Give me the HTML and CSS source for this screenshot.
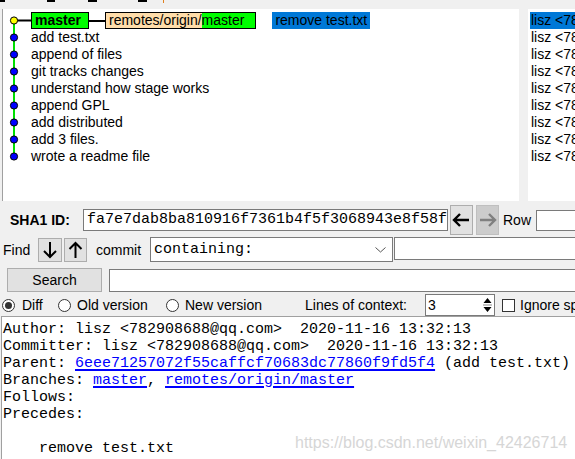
FILE: index.html
```html
<!DOCTYPE html>
<html>
<head>
<meta charset="utf-8">
<link rel="stylesheet" href="styles.css">
</head>
<body>
<div class="app">
  <div class="topstrip">
    <span class="dash d1"></span><span class="dash d2"></span><span class="dash d3"></span><span class="dash d4"></span><span class="tick"></span>
  </div>

  <div class="panes">
    <div class="commits">
      <svg class="graph" width="28" height="160" viewBox="0 0 28 160">
        <line x1="11" y1="8.5" x2="11" y2="144.5" stroke="#00e000" stroke-width="2"/>
        <line x1="11" y1="8.5" x2="28" y2="8.5" stroke="#000" stroke-width="2"/>
        <circle cx="11" cy="8.5" r="3.6" fill="#ffff00" stroke="#000" stroke-width="1"/>
        <circle cx="11" cy="25.5" r="3.6" fill="#0000ff" stroke="#000" stroke-width="1"/>
        <circle cx="11" cy="42.5" r="3.6" fill="#0000ff" stroke="#000" stroke-width="1"/>
        <circle cx="11" cy="59.5" r="3.6" fill="#0000ff" stroke="#000" stroke-width="1"/>
        <circle cx="11" cy="76.5" r="3.6" fill="#0000ff" stroke="#000" stroke-width="1"/>
        <circle cx="11" cy="93.5" r="3.6" fill="#0000ff" stroke="#000" stroke-width="1"/>
        <circle cx="11" cy="110.5" r="3.6" fill="#0000ff" stroke="#000" stroke-width="1"/>
        <circle cx="11" cy="127.5" r="3.6" fill="#0000ff" stroke="#000" stroke-width="1"/>
        <circle cx="11" cy="144.5" r="3.6" fill="#0000ff" stroke="#000" stroke-width="1"/>
      </svg>
      <div class="rows">
        <div class="row">
          <span class="ref head">master</span><span class="connector"></span><span class="ref remote"><span class="rp">remotes/origin/</span><span class="rg">master</span></span><span class="msg sel">remove test.txt</span>
        </div>
        <div class="row">add test.txt</div>
        <div class="row">append of files</div>
        <div class="row">git tracks changes</div>
        <div class="row">understand how stage works</div>
        <div class="row">append GPL</div>
        <div class="row">add distributed</div>
        <div class="row">add 3 files.</div>
        <div class="row">wrote a readme file</div>
      </div>
    </div>
    <div class="authors">
      <div class="arow"><span class="asel">lisz &lt;782908688@qq.com&gt;</span></div>
      <div class="arow"><span class="aname">lisz &lt;782908688@qq.com&gt;</span></div>
      <div class="arow"><span class="aname">lisz &lt;782908688@qq.com&gt;</span></div>
      <div class="arow"><span class="aname">lisz &lt;782908688@qq.com&gt;</span></div>
      <div class="arow"><span class="aname">lisz &lt;782908688@qq.com&gt;</span></div>
      <div class="arow"><span class="aname">lisz &lt;782908688@qq.com&gt;</span></div>
      <div class="arow"><span class="aname">lisz &lt;782908688@qq.com&gt;</span></div>
      <div class="arow"><span class="aname">lisz &lt;782908688@qq.com&gt;</span></div>
      <div class="arow"><span class="aname">lisz &lt;782908688@qq.com&gt;</span></div>
    </div>
  </div>

  <div class="sha-row">
    <span class="sha-lbl">SHA1 ID:</span>
    <div class="entry sha-entry">fa7e7dab8ba810916f7361b4f5f3068943e8f58f</div>
    <div class="navbtn back">
      <svg width="21" height="28" viewBox="0 0 21 28"><path d="M3 14 H18 M9 8 L3 14 L9 20" fill="none" stroke="#000" stroke-width="2.4"/></svg>
    </div>
    <div class="navbtn fwd">
      <svg width="21" height="28" viewBox="0 0 21 28"><path d="M3 14 H18 M12 8 L18 14 L12 20" fill="none" stroke="#808080" stroke-width="2.4"/></svg>
    </div>
    <span class="row-lbl">Row</span>
    <div class="entry row-entry"></div>
  </div>

  <div class="find-row">
    <span class="find-lbl">Find</span>
    <div class="arrbtn down">
      <svg width="22" height="22" viewBox="0 0 22 22"><path d="M11 3 V18 M5 12 L11 18 L17 12" fill="none" stroke="#000" stroke-width="2"/></svg>
    </div>
    <div class="arrbtn up">
      <svg width="21" height="22" viewBox="0 0 21 22"><path d="M10.5 19 V4 M4.5 10 L10.5 4 L16.5 10" fill="none" stroke="#000" stroke-width="2"/></svg>
    </div>
    <span class="commit-lbl">commit</span>
    <div class="combo">
      <span class="combo-text">containing:</span>
      <svg class="chev" width="11" height="6" viewBox="0 0 11 6"><path d="M0.5 0.5 L5.5 5 L10.5 0.5" fill="none" stroke="#555" stroke-width="1"/></svg>
    </div>
    <div class="entry find-entry"></div>
  </div>

  <div class="search-row">
    <div class="btn search-btn">Search</div>
    <div class="entry search-entry"></div>
  </div>

  <div class="diff-row">
    <span class="radio checked"></span><span class="dlbl lbl-diff">Diff</span>
    <span class="radio"></span><span class="dlbl lbl-old">Old version</span>
    <span class="radio"></span><span class="dlbl lbl-new">New version</span>
    <span class="ctx-lbl">Lines of context:</span>
    <div class="spin">
      <span class="spin-val">3</span>
      <svg class="spin-arrows" width="11" height="18" viewBox="0 0 11 18"><path d="M5.5 2 L9.5 7 H1.5 Z M1.5 11 H9.5 L5.5 16 Z" fill="#000"/><path d="M1 9 H10" stroke="#888" stroke-width="1"/></svg>
    </div>
    <span class="checkbox"></span><span class="ign-lbl">Ignore space change</span>
  </div>

  <div class="details"><div class="dline">Author: lisz &lt;782908688@qq.com&gt;  2020-11-16 13:32:13</div><div class="dline">Committer: lisz &lt;782908688@qq.com&gt;  2020-11-16 13:32:13</div><div class="dline">Parent: <span class="lnk">6eee71257072f55caffcf70683dc77860f9fd5f4</span> (add test.txt)</div><div class="dline">Branches: <span class="lnk">master</span>, <span class="lnk">remotes/origin/master</span></div><div class="dline">Follows:</div><div class="dline">Precedes:</div><div class="dline"> </div><div class="dline">    remove test.txt</div></div>

  <div class="watermark">https://blog.csdn.net/weixin_42426714</div>
</div>
</body>
</html>
```

FILE: styles.css
```css
html, body {
  margin: 0;
  padding: 0;
  background: #f0f0f0;
}

.app {
  position: relative;
  width: 575px;
  height: 459px;
  overflow: hidden;
  background: #f0f0f0;
  font-family: "Liberation Sans", Arial, sans-serif;
  font-size: 14px;
  color: #000;
  display: flex;
  flex-direction: column;
}

/* top remnant strip */
.topstrip {
  height: 9px;
  flex: none;
  display: flex;
  align-items: flex-start;
}
.dash { height: 2px; background: #000; flex: none; }
.d1 { width: 5px; }
.d2 { width: 8px; margin-left: 42px; }
.d3 { width: 9px; margin-left: 33px; }
.d4 { width: 9px; margin-left: 41px; }
.tick { width: 1px; height: 3px; margin-left: 16px; background: #e0801e; flex: none; }

/* panes */
.panes {
  height: 192px;
  flex: none;
  display: flex;
}
.commits {
  flex: none;
  margin-left: 2px;
  border-left: 1px solid #a0a0a0;
  width: 516px;
  background: #fff;
  display: flex;
  align-items: flex-start;
  padding-top: 3px;
  overflow: hidden;
}
.graph { flex: none; display: block; }
.rows { flex: 1; }
.row {
  height: 17px;
  line-height: 17px;
  white-space: nowrap;
  display: flex;
  align-items: center;
}
.row > * { flex: none; }
.ref {
  box-sizing: border-box;
  height: 17px;
  line-height: 15px;
  border: 1px solid #000;
  display: flex;
}
.head {
  width: 58px;
  padding-left: 3px;
  background: #00ff00;
  font-weight: bold;
}
.connector {
  width: 16px;
  height: 2px;
  background: #000;
}
.rp { background: #ffddaa; padding-left: 3px; }
.rg { background: #00ff00; padding-right: 11px; }
.sel { background: #0078d7; }
.msg {
  margin-left: 16px;
  padding: 0 3px;
  height: 17px;
  line-height: 17px;
}

.authors {
  margin-left: 9px;
  flex: 1;
  background: #fff;
  padding-top: 3px;
  overflow: hidden;
  white-space: nowrap;
}
.arow {
  height: 17px;
  line-height: 17px;
  padding-left: 2px;
}
.asel {
  display: inline-block;
  background: #0078d7;
  padding-left: 1px;
  padding-right: 40px;
}
.aname { padding-left: 1px; }

/* generic widgets */
.entry {
  box-sizing: border-box;
  background: #fff;
  border: 1px solid #7a7a7a;
}
.btn, .navbtn, .arrbtn {
  box-sizing: border-box;
  background: #e1e1e1;
  border: 1px solid #adadad;
  display: flex;
  align-items: center;
  justify-content: center;
}

/* SHA row */
.sha-row {
  flex: none;
  height: 30px;
  margin-top: 4px;
  padding-left: 10px;
  display: flex;
  align-items: center;
}
.sha-row > * { flex: none; }
.sha-lbl {
  font-weight: bold;
  width: 73px;
}
.sha-entry {
  width: 365px;
  height: 22px;
  padding-left: 3px;
  font-family: "Liberation Mono", "Courier New", monospace;
  font-size: 15px;
  line-height: 20px;
  white-space: nowrap;
  overflow: hidden;
}
.navbtn { width: 23px; height: 30px; }
.back { margin-left: 2px; }
.fwd { margin-left: 3px; background: #cccccc; border-color: #bfbfbf; }
.row-lbl { margin-left: 4px; }
.sha-row .row-entry {
  margin-left: 5px;
  height: 21px;
  flex: 1 0 auto;
  margin-right: -10px;
}

/* Find row */
.find-row {
  flex: none;
  height: 25px;
  margin-top: 2px;
  padding-left: 3px;
  display: flex;
  align-items: center;
}
.find-row > * { flex: none; }
.find-lbl { width: 35px; }
.arrbtn { height: 24px; }
.down { width: 24px; }
.up { width: 23px; margin-left: 2px; }
.commit-lbl { margin-left: 9px; width: 54px; }
.combo {
  box-sizing: border-box;
  width: 243px;
  height: 25px;
  background: #fff;
  border: 1px solid #7a7a7a;
  display: flex;
  align-items: center;
  padding-left: 3px;
}
.combo-text {
  flex: 1;
  font-family: "Liberation Mono", "Courier New", monospace;
  font-size: 15px;
}
.chev { margin-right: 6px; margin-top: 1px; }
.find-row .find-entry {
  align-self: flex-start;
  flex: 1 0 auto;
  height: 23px;
  margin-left: 1px;
  margin-right: -10px;
}

/* Search row */
.search-row {
  flex: none;
  height: 24px;
  margin-top: 6px;
  padding-left: 7px;
  display: flex;
  align-items: flex-start;
}
.search-btn {
  flex: none;
  width: 95px;
  height: 24px;
}
.search-entry {
  flex: 1 0 auto;
  height: 23px;
  margin-top: 1px;
  margin-left: 7px;
  margin-right: -10px;
}

/* Diff options row */
.diff-row {
  flex: none;
  height: 22px;
  margin-top: 2px;
  padding-left: 2px;
  display: flex;
  align-items: center;
  white-space: nowrap;
}
.diff-row > * { flex: none; }
.radio {
  box-sizing: border-box;
  width: 13px;
  height: 13px;
  border: 1px solid #333;
  border-radius: 50%;
  background: #fff;
  display: flex;
  align-items: center;
  justify-content: center;
}
.radio.checked::after {
  content: "";
  width: 7px;
  height: 7px;
  border-radius: 50%;
  background: #333;
}
.dlbl { margin-left: 7px; }
.lbl-diff { width: 36px; }
.lbl-old { margin-left: 6px; width: 89px; }
.lbl-new { margin-left: 6px; width: 120px; }
.ctx-lbl { width: 120px; }
.spin {
  box-sizing: border-box;
  width: 70px;
  height: 22px;
  background: #fff;
  border: 1px solid #7a7a7a;
  display: flex;
  align-items: center;
  padding-left: 2px;
}
.spin-val { flex: 1; }
.spin-arrows { margin-right: 1px; }
.checkbox {
  box-sizing: border-box;
  width: 13px;
  height: 13px;
  border: 1px solid #333;
  background: #fff;
  margin-left: 7px;
}
.ign-lbl { margin-left: 5px; }

/* details */
.details {
  flex: 1;
  margin-left: 1px;
  border-left: 1px solid #a0a0a0;
  border-top: 1px solid #a0a0a0;
  background: #fff;
  padding-top: 4px;
  padding-left: 1px;
  font-family: "Liberation Mono", "Courier New", monospace;
  font-size: 15px;
  line-height: 17px;
  white-space: pre;
  overflow: hidden;
}
.dline { height: 17px; }
.lnk {
  color: #0000ff;
  text-decoration: underline;
  text-decoration-thickness: 2px;
  text-underline-offset: 2px;
}

.watermark {
  position: absolute;
  left: 295px;
  top: 434px;
  font-family: "Liberation Sans", Arial, sans-serif;
  font-size: 16px;
  line-height: 18px;
  color: #d6d6d6;
  white-space: nowrap;
}
```
